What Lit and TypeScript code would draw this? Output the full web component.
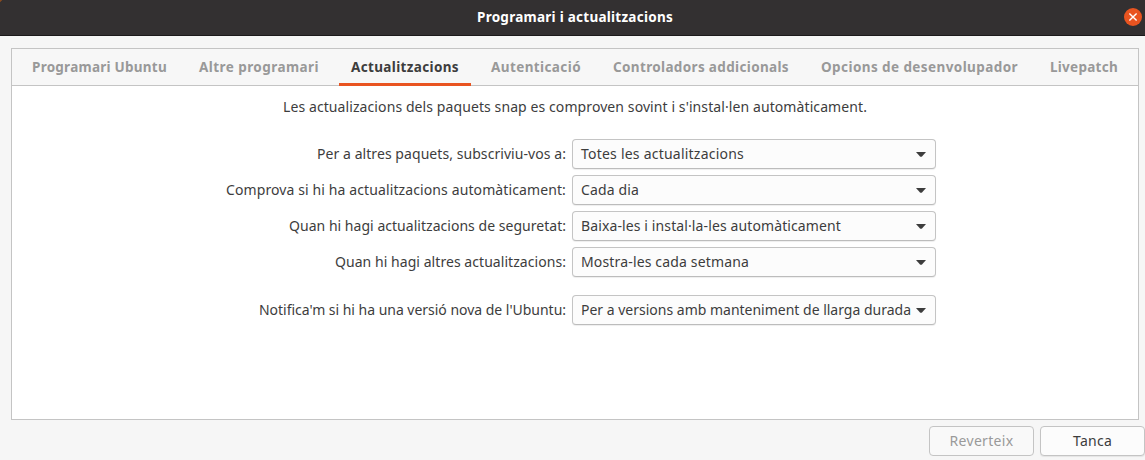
import { LitElement, html, css } from "lit";
import { customElement, property } from "lit/decorators.js";

/** A run of text whose tracking is set so that it fills a given advance width. */
@customElement("tracked-text")
class TrackedText extends LitElement {
  @property() text = "";
  @property({ type: Number }) width = 0;

  static styles = css`
    :host { display: inline-block; white-space: nowrap; }
    .run { display: inline-block; }
  `;

  updated() {
    const run = this.renderRoot.querySelector(".run") as HTMLElement;
    run.style.letterSpacing = "0px";
    const natural = run.getBoundingClientRect().width;
    run.style.letterSpacing = `${(this.width - natural) / this.text.length}px`;
  }

  render() {
    return html`<span class="run">${this.text}</span>`;
  }
}

@customElement("combo-box")
class ComboBox extends LitElement {
  @property() text = "";
  @property({ type: Number }) width = 0;

  static styles = css`
    :host {
      box-sizing: border-box;
      display: flex;
      align-items: center;
      justify-content: space-between;
      width: 364px;
      height: 30px;
      padding: 0 9px 0 8px;
      border: 1px solid #c4c4c4;
      border-bottom-color: #bcbcbc;
      border-radius: 4px;
      background: #fcfcfc;
      box-shadow: 0 1px 1px rgba(0, 0, 0, 0.07);
    }
    svg { display: block; flex: none; }
  `;

  render() {
    return html`
      <tracked-text .text=${this.text} .width=${this.width}></tracked-text>
      <svg width="10" height="5" viewBox="0 0 10 5"><path d="M0 0H10L6 4.4Q5 5.3 4 4.4Z" fill="#3d3d3d" /></svg>
    `;
  }
}

const tabs = [
  { text: "Programari Ubuntu", width: 135 },
  { text: "Altre programari", width: 120 },
  { text: "Actualitzacions", width: 108, active: true },
  { text: "Autenticació", width: 90 },
  { text: "Controladors addicionals", width: 176 },
  { text: "Opcions de desenvolupador", width: 197 },
  { text: "Livepatch", width: 68 },
];

const rows = [
  { label: "Per a altres paquets, subscriviu-vos a:", lw: 249, value: "Totes les actualitzacions", vw: 163 },
  { label: "Comprova si hi ha actualitzacions automàticament:", lw: 340, value: "Cada dia", vw: 58 },
  { label: "Quan hi hagi actualitzacions de seguretat:", lw: 277, value: "Baixa-les i instal·la-les automàticament", vw: 260 },
  { label: "Quan hi hagi altres actualitzacions:", lw: 231, value: "Mostra-les cada setmana", vw: 168 },
  { label: "Notifica'm si hi ha una versió nova de l'Ubuntu:", lw: 307, value: "Per a versions amb manteniment de llarga durada", vw: 330, apart: true },
];

@customElement("app-root")
class AppRoot extends LitElement {
  static styles = css`
    :host {
      display: flex;
      flex-direction: column;
      height: 460px;
      overflow: hidden;
      background: #f6f6f6;
      color: #3d3d3d;
      font: 14px/20px "Noto Sans", "Open Sans", sans-serif;
    }
    .titlebar {
      box-sizing: border-box;
      flex: none;
      display: grid;
      grid-template-columns: 1fr auto 1fr;
      align-items: center;
      height: 36px;
      padding: 0 3px 1px 8px;
      border-bottom: 1px solid #1c1a1b;
      background: linear-gradient(135deg, #8a4a1e 0 1.2px, transparent 2px), #333031;
    }
    .title { grid-column: 2; color: #fff; font-weight: 700; font-size: 13.5px; }
    .close { justify-self: end; display: block; }
    .notebook {
      box-sizing: border-box;
      flex: none;
      height: 372px;
      margin: 12px 6px 0 11px;
      border: 1px solid #c4c4c4;
      background: #fff;
    }
    .tabs {
      box-sizing: border-box;
      display: flex;
      gap: 8px;
      height: 37px;
      padding: 0 8px;
      border-bottom: 1px solid #c4c4c4;
      background: #f7f7f7;
      color: #999;
      font-weight: 700;
      font-size: 13.5px;
    }
    .tab {
      box-sizing: border-box;
      height: 37px;
      padding: 8px 12px 0;
      border-bottom: 3px solid transparent;
    }
    .tab.active { color: #3d3d3d; border-bottom-color: #e95420; }
    .intro { display: flex; justify-content: center; padding-top: 11px; height: 31px; box-sizing: border-box; }
    .form { display: flex; flex-direction: column; gap: 6px; padding-top: 22px; }
    .row { display: grid; grid-template-columns: 554px 364px; column-gap: 6px; align-items: center; }
    .row.apart { margin-top: 12px; }
    .label { justify-self: end; }
    .actions { display: flex; justify-content: flex-end; gap: 6px; padding-top: 6px; }
    .button {
      box-sizing: border-box;
      display: flex;
      align-items: center;
      justify-content: center;
      width: 105px;
      height: 30px;
      border: 1px solid #c4c4c4;
      border-radius: 4px;
      background: #fcfcfc;
      box-shadow: 0 1px 1px rgba(0, 0, 0, 0.07);
    }
    .button.disabled { color: #9a9a9a; background: #f9f9f9; box-shadow: none; }
  `;

  render() {
    return html`
      <div class="titlebar">
        <tracked-text class="title" .text=${"Programari i actualitzacions"} .width=${196}></tracked-text>
        <svg class="close" width="18" height="18" viewBox="0 0 18 18">
          <circle cx="9" cy="9" r="9" fill="#e95420" />
          <path d="M5.4 5.4L12.6 12.6M12.6 5.4L5.4 12.6" stroke="#fff" stroke-width="1.4" />
        </svg>
      </div>
      <div class="notebook">
        <div class="tabs">
          ${tabs.map(
            (t) => html`<div class="tab ${t.active ? "active" : ""}">
              <tracked-text .text=${t.text} .width=${t.width}></tracked-text>
            </div>`
          )}
        </div>
        <div class="intro">
          <tracked-text
            .text=${"Les actualizacions dels paquets snap es comproven sovint i s'instal·len automàticament."}
            .width=${584}
          ></tracked-text>
        </div>
        <div class="form">
          ${rows.map(
            (r) => html`<div class="row ${r.apart ? "apart" : ""}">
              <tracked-text class="label" .text=${r.label} .width=${r.lw}></tracked-text>
              <combo-box .text=${r.value} .width=${r.vw}></combo-box>
            </div>`
          )}
        </div>
      </div>
      <div class="actions">
        <div class="button disabled"><tracked-text .text=${"Reverteix"} .width=${64}></tracked-text></div>
        <div class="button"><tracked-text .text=${"Tanca"} .width=${39}></tracked-text></div>
      </div>
    `;
  }
}
